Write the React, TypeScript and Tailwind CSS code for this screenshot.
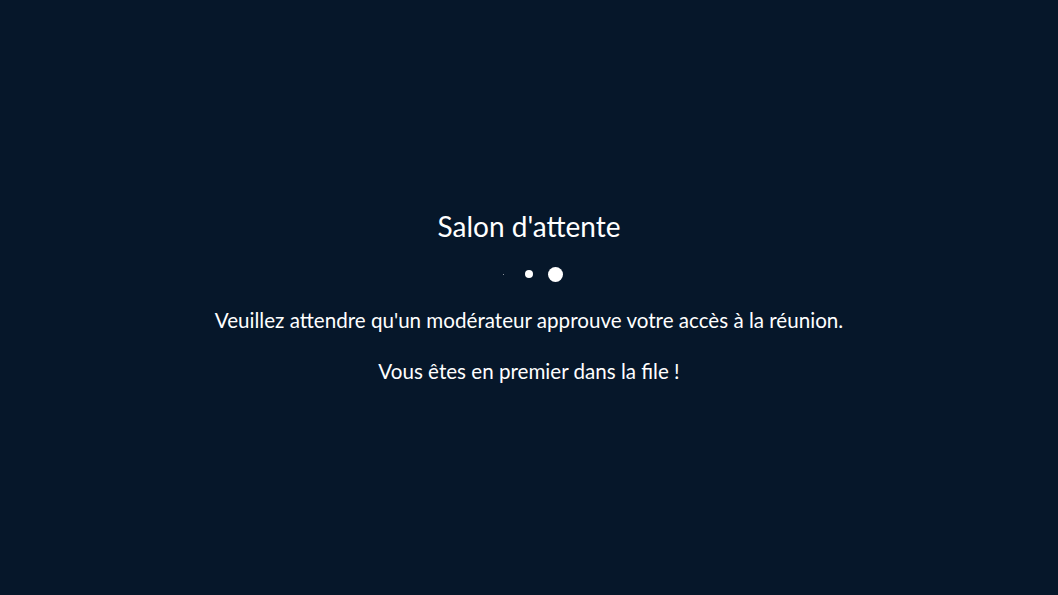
export default function App() {
  return (
    <div
      className="flex h-[595px] w-full flex-col items-center justify-center bg-[#06172a] text-white"
      style={{ fontFamily: "Lato, 'Noto Sans', sans-serif" }}
    >
      <div className="flex flex-col items-center pb-[2px]">
        <h1 className="text-[28px] leading-[36px]">Salon d'attente</h1>
        <div className="mt-[22px] flex h-[16px] items-center gap-[10px]">
          <span className="flex w-[16px] justify-center">
            <span className="h-[1px] w-[1px] rounded-full bg-white/70" />
          </span>
          <span className="flex w-[16px] justify-center">
            <span className="h-[8px] w-[8px] rounded-full bg-white" />
          </span>
          <span className="flex w-[16px] justify-center">
            <span className="h-[15px] w-[15px] rounded-full bg-white" />
          </span>
        </div>
        <p className="mt-[24px] text-[20.6px] leading-[28px]">
          Veuillez attendre qu'un modérateur approuve votre accès à la réunion.
        </p>
        <p className="mt-[23px] text-[20.6px] leading-[28px]">
          Vous êtes en premier dans la file !
        </p>
      </div>
    </div>
  );
}
